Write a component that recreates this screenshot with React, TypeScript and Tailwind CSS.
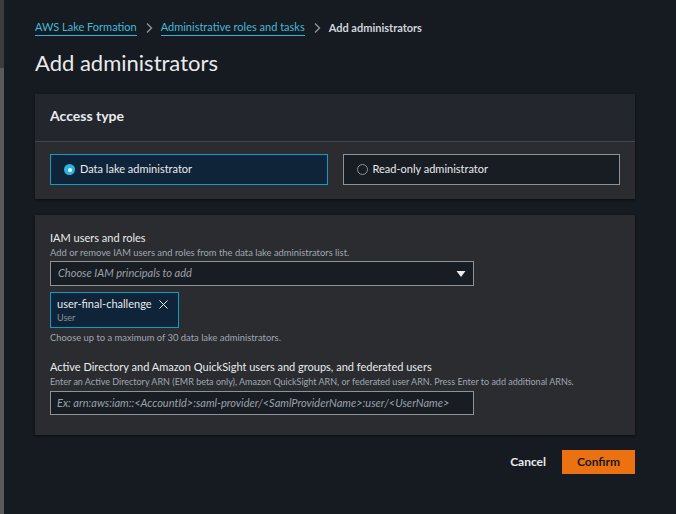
import { X } from "lucide-react";

const Chevron = () => (
  <svg width="10" height="12" viewBox="0 0 10 12" className="mx-[7px] text-[#8d9399]">
    <path d="M3 1.5 7.5 6 3 10.5" fill="none" stroke="currentColor" strokeWidth="1.4" />
  </svg>
);

const RadioCard = ({ label, checked }: { label: string; checked?: boolean }) => (
  <div
    className={`flex h-[31px] flex-1 items-center gap-[5px] border px-[13px] text-[11px] text-[#e9ebed] ${
      checked ? "border-[#0a9ec9] bg-[#0f2438]" : "border-[#8d9399] bg-[#181c23]"
    }`}
  >
    {checked ? (
      <span className="flex h-[11px] w-[11px] items-center justify-center rounded-full bg-[#2ab4e0]">
        <span className="h-[4px] w-[4px] rounded-full bg-white" />
      </span>
    ) : (
      <span className="h-[11px] w-[11px] rounded-full border border-[#8d9399]" />
    )}
    <span>{label}</span>
  </div>
);

export default function App() {
  return (
    <div className="flex min-h-[514px] bg-[#161a21]" style={{ fontFamily: 'Lato, "Noto Sans", sans-serif' }}>
      <div className="flex w-[5px] shrink-0 flex-col">
        <div className="h-[68px] w-[4px] bg-[#3d3d3d]" />
        <div className="w-[4px] flex-1 bg-[#5a5a5a]" />
      </div>
      <div className="flex-1 pl-[30px] pr-[41px] pt-[19px]">
        <nav className="flex items-center text-[11px] leading-[16px]">
          <a className="border-b border-[#2ab4e0] text-[#44b9d6]">AWS Lake Formation</a>
          <Chevron />
          <a className="border-b border-[#2ab4e0] text-[#44b9d6]">Administrative roles and tasks</a>
          <Chevron />
          <span className="font-bold text-[#d1d5db]">Add administrators</span>
        </nav>

        <h1 className="mt-[12px] text-[22px] leading-[30px] text-[#e9ebed]">Add administrators</h1>

        <section className="mt-[16px] bg-[#2a2c30] shadow-[0_1px_2px_rgba(0,0,0,0.5)]">
          <div className="border-b border-[#414750] bg-[#23262d] px-[15px] pb-[16px] pt-[13px]">
            <h2 className="text-[14px] font-bold leading-[18px] text-[#e9ebed]">Access type</h2>
          </div>
          <div className="flex gap-[15px] px-[15px] pb-[14px] pt-[12px]">
            <RadioCard label="Data lake administrator" checked />
            <RadioCard label="Read-only administrator" />
          </div>
        </section>

        <section className="mt-[16px] bg-[#2a2c30] px-[15px] pb-[20px] pt-[15px] shadow-[0_1px_2px_rgba(0,0,0,0.5)]">
          <div className="text-[11px] leading-[16px] text-[#e9ebed]">IAM users and roles</div>
          <div className="mt-[1px] text-[9.4px] leading-[12px] text-[#a0a7b0]">
            Add or remove IAM users and roles from the data lake administrators list.
          </div>
          <div className="mt-[2px] flex h-[25px] w-[424px] items-center justify-between border border-[#8d9399] bg-[#181c23] px-[7px]">
            <span className="text-[11px] italic text-[#9ba1a8]">Choose IAM principals to add</span>
            <svg width="10" height="8" viewBox="0 0 10 8">
              <path d="M0.5 1h9L5 7z" fill="#e9ebed" />
            </svg>
          </div>
          <div className="mt-[6px] flex w-[129px] items-start justify-between border border-[#0a9ec9] bg-[#0f2438] px-[6px] pb-[3px] pt-[3px]">
            <div className="whitespace-nowrap">
              <div className="text-[11px] leading-[16px] text-[#e9ebed]">user-final-challenge</div>
              <div className="text-[9px] leading-[12px] text-[#8d9399]">User</div>
            </div>
            <X size={15} strokeWidth={1.6} className="mr-[1px] mt-[1px] text-[#e9ebed]" />
          </div>
          <div className="mt-[4px] text-[9.4px] leading-[12px] text-[#a0a7b0]">
            Choose up to a maximum of 30 data lake administrators.
          </div>

          <div className="mt-[15px] text-[11px] leading-[16px] text-[#e9ebed]">
            Active Directory and Amazon QuickSight users and groups, and federated users
          </div>
          <div className="mt-[1px] text-[9px] leading-[12px] text-[#a0a7b0]">
            Enter an Active Directory ARN (EMR beta only), Amazon QuickSight ARN, or federated user ARN. Press Enter to add additional ARNs.
          </div>
          <div className="mt-[3px] flex h-[24px] w-[424px] items-center border border-[#8d9399] bg-[#181c23] px-[6px]">
            <span className="whitespace-nowrap text-[11px] italic text-[#9ba1a8]">
              Ex: arn:aws:iam::&lt;AccountId&gt;:saml-provider/&lt;SamlProviderName&gt;:user/&lt;UserName&gt;
            </span>
          </div>
        </section>

        <div className="mt-[15px] flex items-center justify-end gap-[16px]">
          <button className="text-[12px] font-bold leading-[16px] text-[#e9ebed]">Cancel</button>
          <button className="h-[24px] w-[73px] bg-[#ec7211] text-[12px] font-bold text-[#16191f]">Confirm</button>
        </div>
      </div>
    </div>
  );
}
